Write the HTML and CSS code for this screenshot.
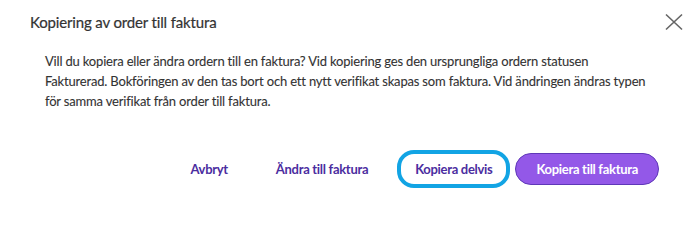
FILE: index.html
```html
<!DOCTYPE html>
<html lang="sv">
<head>
<meta charset="utf-8">
<title>Kopiering av order till faktura</title>
<link rel="stylesheet" href="styles.css">
</head>
<body>
<div class="dialog" role="dialog" aria-labelledby="dlg-title">
  <div class="dialog-header">
    <h2 id="dlg-title" class="dialog-title">Kopiering av order till faktura</h2>
    <button class="close-btn" aria-label="Stäng">
      <svg width="18" height="18" viewBox="0 0 18 18" aria-hidden="true">
        <path d="M1 1.5 L17 16.5 M17 1.5 L1 16.5" stroke="#666" stroke-width="1.6" fill="none"/>
      </svg>
    </button>
  </div>
  <p class="dialog-body">Vill du kopiera eller ändra ordern till en faktura? Vid kopiering ges den ursprungliga ordern statusen Fakturerad. Bokföringen av den tas bort och ett nytt verifikat skapas som faktura. Vid ändringen ändras typen för samma verifikat från order till faktura.</p>
  <div class="dialog-footer">
    <button class="btn btn-text btn-cancel">Avbryt</button>
    <button class="btn btn-text">Ändra till faktura</button>
    <button class="btn btn-outline btn-focus">Kopiera delvis</button>
    <button class="btn btn-primary">Kopiera till faktura</button>
  </div>
</div>
</body>
</html>
```
FILE: styles.css
```css
* { box-sizing: border-box; }
html, body { margin: 0; padding: 0; background: #fff; }
body { font-family: Lato, "Noto Sans", sans-serif; color: #333; }

.dialog {
  width: 691px;
  height: 204px;
  background: #fff;
  display: flex;
  flex-direction: column;
}

.dialog-header {
  display: flex;
  align-items: center;
  justify-content: space-between;
  padding: 10px 5px 0 30px;
}

.dialog-title {
  margin: 0;
  font-size: 15px;
  font-weight: 400;
  line-height: 24px;
  letter-spacing: -0.15px;
  color: #333;
  -webkit-text-stroke: 0.2px #333;
}

.close-btn {
  width: 24px;
  height: 24px;
  padding: 0;
  border: 0;
  background: transparent;
  display: flex;
  align-items: center;
  justify-content: center;
  cursor: pointer;
}

.dialog-body {
  margin: 17px 0 0 0;
  padding: 0 40px 0 45px;
  font-size: 13px;
  line-height: 20px;
  letter-spacing: -0.18px;
  color: #333;
  -webkit-text-stroke: 0.1px #333;
}

.dialog-footer {
  display: flex;
  justify-content: flex-end;
  align-items: center;
  gap: 9px;
  margin-top: 42px;
  padding-right: 32px;
}

.btn {
  height: 32px;
  border-radius: 16px;
  font-family: Lato, "Noto Sans", sans-serif;
  font-size: 13px;
  font-weight: 700;
  letter-spacing: -0.3px;
  line-height: 30px;
  border: 1px solid transparent;
  background: transparent;
  color: #4b2d9f;
  cursor: pointer;
  white-space: nowrap;
}

.btn-text { padding: 0 20px; }
.btn-cancel { padding-right: 17px; }

.btn-outline {
  padding: 0 14px;
  margin-left: 2px;
  background: #fff;
}

.btn-focus {
  outline: 4px solid #12a4e4;
  outline-offset: -1px;
  border-radius: 14px;
}

.btn-primary {
  padding: 0 20px;
  background: #9358e8;
  border-color: #5f38b8;
  color: #fff;
  margin-left: -1px;
}
```
